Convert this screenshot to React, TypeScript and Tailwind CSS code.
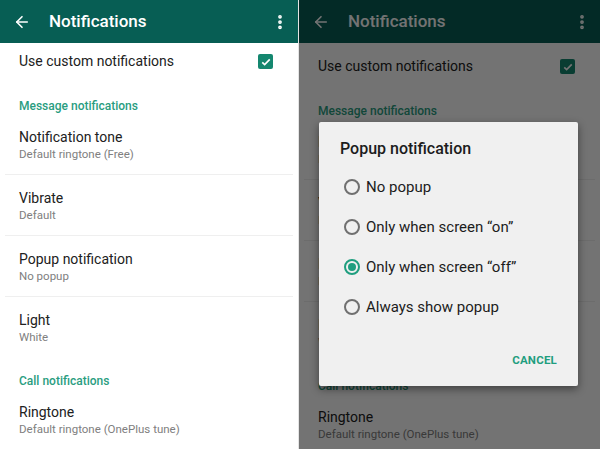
import { ArrowLeft, EllipsisVertical } from 'lucide-react';

const font = { fontFamily: "Roboto, 'Noto Sans', sans-serif" };

function Item({ title, subtitle, divider = true }: { title: string; subtitle: string; divider?: boolean }) {
  return (
    <div className={`h-[61px] pl-[14px] pt-[14px] mx-[5px] ${divider ? 'border-b border-[#efefef]' : ''}`}>
      <p className="text-[14px] leading-[18px] text-[#212121]">{title}</p>
      <p className="text-[11.5px] leading-[16px] text-[#808080]">{subtitle}</p>
    </div>
  );
}

function Section({ label, height }: { label: string; height: string }) {
  return (
    <div className={`${height} flex items-end pl-[19px]`}>
      <p className="text-[12px] leading-[16px] font-medium text-[#2a9d7f]">{label}</p>
    </div>
  );
}

function Phone({ shift = false }: { shift?: boolean }) {
  return (
    <div className="h-[449px] bg-white overflow-hidden">
      {/* Toolbar */}
      <div className="h-[43px] bg-[#075E54] flex items-center text-white">
        <ArrowLeft className="w-[18px] h-[18px] ml-[13px]" strokeWidth={2.2} />
        <span className="ml-[18px] text-[17px] font-medium">Notifications</span>
        <EllipsisVertical className="w-[18px] h-[18px] ml-auto mr-[9px]" strokeWidth={3} />
      </div>

      <div className={shift ? 'pt-[5px]' : ''}>
        {/* Master switch */}
        <div className="h-[37px] flex items-center pl-[19px] pr-[25px]">
          <span className="text-[14px] text-[#212121]">Use custom notifications</span>
          <span className="ml-auto w-[15px] h-[15px] rounded-[2px] bg-[#14876f] flex items-center justify-center">
            <svg viewBox="0 0 16 16" className="w-[12px] h-[12px]" fill="none" stroke="white" strokeWidth="2.2">
              <path d="M3 8.5l3.2 3L13 4.5" />
            </svg>
          </span>
        </div>

        <Section label="Message notifications" height="h-[34px]" />
        <Item title="Notification tone" subtitle="Default ringtone (Free)" />
        <Item title="Vibrate" subtitle="Default" />
        <Item title="Popup notification" subtitle="No popup" />
        <Item title="Light" subtitle="White" divider={false} />

        <Section label="Call notifications" height="h-[31px]" />
        <Item title="Ringtone" subtitle="Default ringtone (OnePlus tune)" divider={false} />
      </div>
    </div>
  );
}

const options = ['No popup', 'Only when screen “on”', 'Only when screen “off”', 'Always show popup'];

function PopupDialog() {
  return (
    <div className="absolute left-[20px] top-[122px] w-[259px] h-[264px] bg-[#f0f0f0] rounded-[2px] shadow-[0_3px_8px_rgba(0,0,0,0.45)] flex flex-col">
      <p className="pl-[21px] pt-[16px] text-[16px] leading-[22px] font-medium text-[#1c1c1c]">Popup notification</p>
      <div className="mt-[7px] flex flex-col">
        {options.map((opt, i) => {
          const selected = i === 2;
          return (
            <div key={opt} className="h-[40px] flex items-center pl-[25px]">
              <span
                className={`w-[16px] h-[16px] rounded-full border-2 flex items-center justify-center ${
                  selected ? 'border-[#1f9e7f]' : 'border-[#707070]'
                }`}
              >
                {selected && <span className="w-[8px] h-[8px] rounded-full bg-[#1f9e7f]" />}
              </span>
              <span className="ml-[6px] text-[15px] text-[#1c1c1c]">{opt}</span>
            </div>
          );
        })}
      </div>
      <div className="mt-auto mb-[17px] flex justify-end pr-[21px]">
        <span className="text-[11.5px] font-bold tracking-[0.2px] text-[#1f9e7f]">CANCEL</span>
      </div>
    </div>
  );
}

export default function App() {
  return (
    <div className="w-[600px] h-[449px] flex overflow-hidden bg-white" style={font}>
      <div className="w-[299px] border-r border-[#e4e4e4]">
        <Phone />
      </div>
      <div className="relative w-[301px]">
        <Phone shift />
        <div className="absolute inset-0 bg-black/55" />
        <PopupDialog />
      </div>
    </div>
  );
}
